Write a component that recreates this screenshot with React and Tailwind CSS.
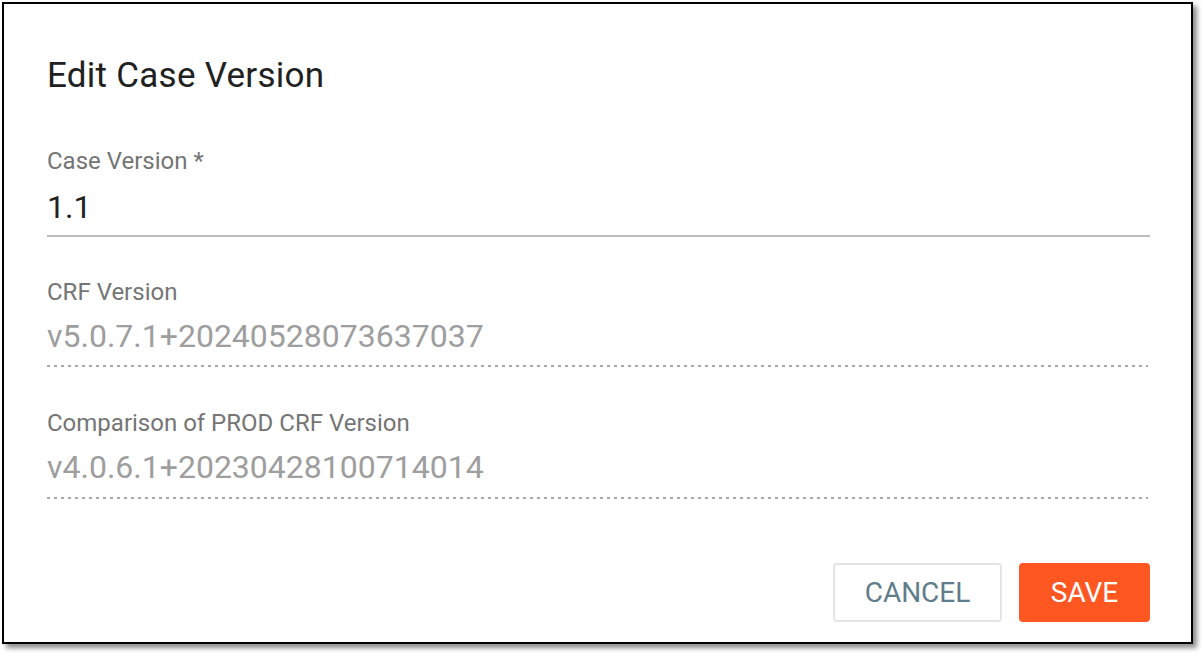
export default function App() {
  const dotted =
    "h-[2px] bg-[linear-gradient(to_right,#a8a8a8_3px,transparent_3px)] bg-[length:7px_2px] bg-repeat-x";
  return (
    <div className="w-[1202px] h-[654px] bg-white p-[2px]" style={{ fontFamily: "Roboto, 'Noto Sans', sans-serif" }}>
      <div className="w-[1191px] h-[642px] border-2 border-black bg-white shadow-[4px_4px_5px_rgba(0,0,0,0.45)] flex flex-col pl-[43px] pr-[41px]">
        <div className="pt-[54px] text-[35px] leading-[35px] tracking-[0.26px] text-[#212121]">Edit Case Version</div>

        <div className="mt-[56px] text-[24px] leading-[24px] text-[#757575]">Case Version *</div>
        <div className="mt-[18px] text-[32px] leading-[32px] text-[#212121]">1.1</div>
        <div className="mt-[12px] h-[2px] bg-[#bdbdbd]"></div>

        <div className="mt-[43px] text-[24px] leading-[24px] text-[#757575]">CRF Version</div>
        <div className="mt-[16px] text-[32px] leading-[32px] text-[#9e9e9e]">v5.0.7.1+20240528073637037</div>
        <div className={"mt-[13px] mr-[2px] " + dotted}></div>

        <div className="mt-[44px] text-[24px] leading-[24px] text-[#757575]">Comparison of PROD CRF Version</div>
        <div className="mt-[16px] text-[32px] leading-[32px] text-[#9e9e9e]">v4.0.6.1+20230428100714014</div>
        <div className={"mt-[14px] mr-[2px] " + dotted}></div>

        <div className="mt-[64px] flex justify-end gap-[17px]">
          <button className="w-[169px] h-[59px] rounded-[4px] border-2 border-[#e4e4e4] bg-white text-[28px] leading-none text-[#607d8b] flex items-center justify-center">
            CANCEL
          </button>
          <button className="w-[131px] h-[59px] rounded-[4px] bg-[#ff5722] text-[28px] leading-none text-white flex items-center justify-center">
            SAVE
          </button>
        </div>
      </div>
    </div>
  );
}
